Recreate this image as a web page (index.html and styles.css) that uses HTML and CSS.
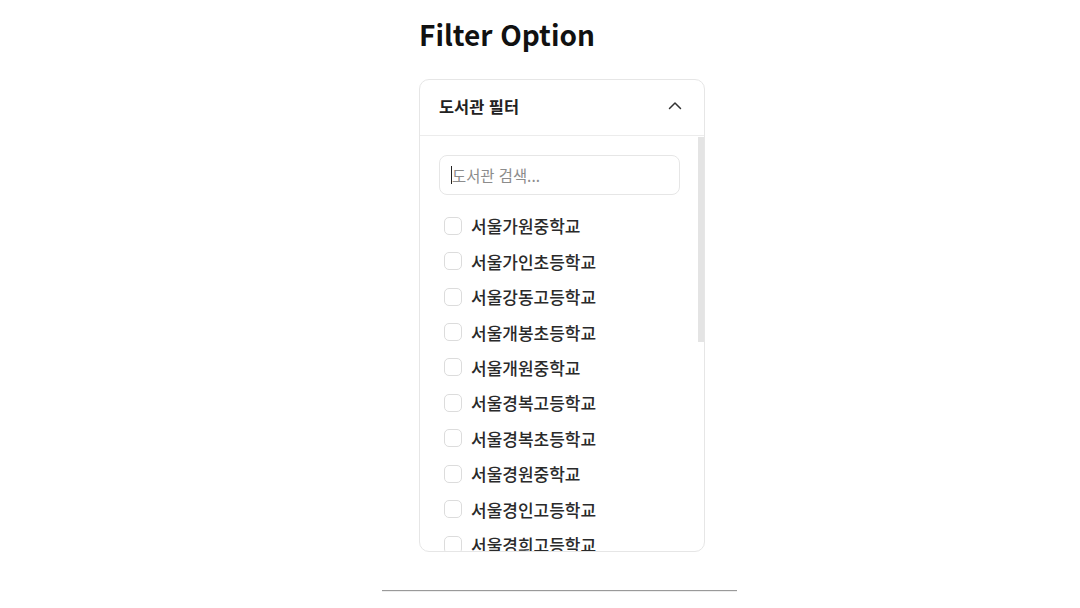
FILE: index.html
```html
<!DOCTYPE html>
<html lang="ko">
<head>
<meta charset="utf-8">
<title>Filter Option</title>
<link rel="stylesheet" href="styles.css">
</head>
<body>
<div class="page">
  <div class="content">
    <h1 class="title">Filter Option</h1>
    <section class="card">
      <header class="card-header">
        <span class="card-title">도서관 필터</span>
        <svg class="chevron" width="16" height="16" viewBox="0 0 16 16" fill="none">
          <path d="M2.5 10.5 L8 5 L13.5 10.5" stroke="#333" stroke-width="1.5" stroke-linecap="round" stroke-linejoin="round"/>
        </svg>
      </header>
      <div class="card-body">
        <div class="search"><span class="caret"></span><span class="placeholder">도서관 검색...</span></div>
        <ul class="list">
          <li class="item"><span class="box"></span><span>서울가원중학교</span></li>
          <li class="item"><span class="box"></span><span>서울가인초등학교</span></li>
          <li class="item"><span class="box"></span><span>서울강동고등학교</span></li>
          <li class="item"><span class="box"></span><span>서울개봉초등학교</span></li>
          <li class="item"><span class="box"></span><span>서울개원중학교</span></li>
          <li class="item"><span class="box"></span><span>서울경복고등학교</span></li>
          <li class="item"><span class="box"></span><span>서울경복초등학교</span></li>
          <li class="item"><span class="box"></span><span>서울경원중학교</span></li>
          <li class="item"><span class="box"></span><span>서울경인고등학교</span></li>
          <li class="item"><span class="box"></span><span>서울경희고등학교</span></li>
          <li class="item"><span class="box"></span><span>서울고등학교</span></li>
          <li class="item"><span class="box"></span><span>서울고명초등학교</span></li>
          <li class="item"><span class="box"></span><span>서울고척초등학교</span></li>
          <li class="item"><span class="box"></span><span>서울공덕초등학교</span></li>
          <li class="item"><span class="box"></span><span>서울공항고등학교</span></li>
          <li class="item"><span class="box"></span><span>서울관악고등학교</span></li>
          <li class="item"><span class="box"></span><span>서울광남초등학교</span></li>
          <li class="item"><span class="box"></span><span>서울광운초등학교</span></li>
          <li class="item"><span class="box"></span><span>서울교동초등학교</span></li>
          <li class="item"><span class="box"></span><span>서울구로초등학교</span></li>
          <li class="item"><span class="box"></span><span>서울구일초등학교</span></li>
        </ul>
      </div>
      <span class="thumb"></span>
    </section>
  </div>
  <hr class="rule">
</div>
</body>
</html>
```
FILE: styles.css
```css
* { box-sizing: border-box; }
html, body { margin: 0; padding: 0; background: #fff; }
body {
  font-family: "Noto Sans CJK KR", "Noto Sans", sans-serif;
  color: #222;
}
.page {
  width: 355px;
  margin-left: 382px;
  padding-top: 12px;
}
.content {
  padding: 0 32px 0 37px;
}
.title {
  margin: 0;
  font-size: 28px;
  line-height: 44px;
  font-weight: 700;
  color: #111;
}
.card {
  position: relative;
  margin-top: 23px;
  border: 1px solid #e6e6e6;
  border-radius: 10px;
  overflow: hidden;
}
.card-header {
  height: 56px;
  border-bottom: 1px solid #ececec;
  display: flex;
  align-items: center;
  justify-content: space-between;
  padding: 0 21px 3px 19px;
}
.card-title {
  font-size: 16.4px;
  font-weight: 700;
  color: #222;
}
.chevron { display: block; }
.card-body {
  height: 415px;
  overflow-y: auto;
  padding: 19px 24px 19px 19px;
  scrollbar-width: none;
}
.card-body::-webkit-scrollbar { width: 0; }
.thumb {
  position: absolute;
  right: 0;
  top: 57px;
  width: 6px;
  height: 205px;
  background: #e4e4e4;
}
.search {
  height: 40px;
  border: 1px solid #e6e6e6;
  border-radius: 8px;
  display: flex;
  align-items: center;
  padding-left: 11px;
}
.caret {
  width: 1px;
  height: 18px;
  background: #222;
}
.placeholder {
  font-size: 15.4px;
  color: #8c8c8c;
}
.list {
  list-style: none;
  margin: 13px 0 0;
  padding: 0;
}
.item {
  height: 35.44px;
  display: flex;
  align-items: center;
  gap: 9px;
  padding-left: 5px;
  font-size: 17px;
  font-weight: 500;
  color: #2a2a2a;
}
.box {
  width: 18px;
  height: 18px;
  border: 1px solid #dcdcdc;
  border-radius: 5px;
  flex: none;
}
.rule {
  margin: 38px 0 0;
  border: 0;
  border-top: 1px solid #9a9a9a;
  border-bottom: 1px solid #eeeeee;
  height: 0;
}
```
